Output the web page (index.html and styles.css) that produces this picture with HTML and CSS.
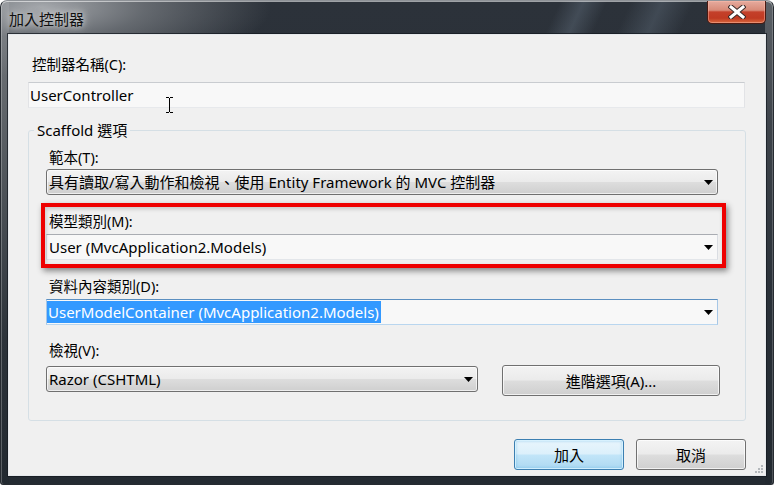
FILE: index.html
```html
<!DOCTYPE html>
<html lang="zh-Hant">
<head>
<meta charset="utf-8">
<title>加入控制器</title>
<link rel="stylesheet" href="styles.css">
</head>
<body>
<div class="window">
  <div class="titlebar">
    <span class="title">加入控制器</span>
    <div class="close">
      <svg width="18" height="14" viewBox="0 0 18 14" aria-hidden="true">
        <path d="M3 2 L15 12 M15 2 L3 12" stroke="#3a2a28" stroke-width="5" stroke-linecap="square" fill="none"/>
        <path d="M3 2 L15 12 M15 2 L3 12" stroke="#ffffff" stroke-width="3" stroke-linecap="square" fill="none"/>
      </svg>
    </div>
  </div>
  <div class="client">
    <div class="label">控制器名稱(C):</div>
    <div class="textbox">
      <span class="value">UserController</span>
      <svg class="ibeam" width="7" height="16" viewBox="0 0 7 16" aria-hidden="true">
        <path d="M0 0.5H3M4 0.5H7M3.5 1V15M0 15.5H3M4 15.5H7" stroke="#000" stroke-width="1" fill="none"/>
      </svg>
    </div>
    <fieldset class="group">
      <legend>Scaffold 選項</legend>
      <div class="label first">範本(T):</div>
      <div class="combo combo-btn gap-s">
        <span class="value">具有讀取/寫入動作和檢視、使用 Entity Framework 的 MVC 控制器</span>
        <svg class="arrow" width="9" height="5" viewBox="0 0 9 5" aria-hidden="true"><path d="M0 0H9L4.5 5Z" fill="#000"/></svg>
      </div>
      <div class="mark-wrap">
        <div class="label">模型類別(M):</div>
        <div class="combo combo-edit gap-s">
          <span class="value">User (MvcApplication2.Models)</span>
          <svg class="arrow" width="9" height="5" viewBox="0 0 9 5" aria-hidden="true"><path d="M0 0H9L4.5 5Z" fill="#000"/></svg>
        </div>
        <div class="mark"></div>
      </div>
      <div class="label next">資料內容類別(D):</div>
      <div class="combo combo-edit combo-focus gap-s">
        <span class="value sel">UserModelContainer (MvcApplication2.Models)</span>
        <svg class="arrow" width="9" height="5" viewBox="0 0 9 5" aria-hidden="true"><path d="M0 0H9L4.5 5Z" fill="#000"/></svg>
      </div>
      <div class="row">
        <div class="col">
          <div class="label view">檢視(V):</div>
          <div class="combo combo-btn gap-v">
            <span class="value">Razor (CSHTML)</span>
            <svg class="arrow" width="9" height="5" viewBox="0 0 9 5" aria-hidden="true"><path d="M0 0H9L4.5 5Z" fill="#000"/></svg>
          </div>
        </div>
        <div class="btn btn-adv">進階選項(A)...</div>
      </div>
    </fieldset>
    <div class="buttons">
      <div class="btn btn-default">加入</div>
      <div class="btn">取消</div>
    </div>
    <svg class="grip" width="10" height="10" viewBox="0 0 10 10" aria-hidden="true">
      <g fill="#b4b8bc">
        <rect x="7" y="1" width="2" height="2"/>
        <rect x="4" y="4" width="2" height="2"/><rect x="7" y="4" width="2" height="2"/>
        <rect x="1" y="7" width="2" height="2"/><rect x="4" y="7" width="2" height="2"/><rect x="7" y="7" width="2" height="2"/>
      </g>
    </svg>
  </div>
</div>
</body>
</html>
```
FILE: styles.css
```css
html, body {
  margin: 0;
  padding: 0;
  background: #ffffff;
}

body {
  font-family: "Noto Sans", "Noto Sans CJK TC", sans-serif;
  color: #000;
}

.window {
  width: 774px;
  height: 485px;
  box-sizing: border-box;
  display: flex;
  flex-direction: column;
  border: 1px solid #262b31;
  border-top-color: #8e9297;
  border-radius: 7px 7px 3px 3px;
  overflow: hidden;
  box-shadow: inset 0 1px 0 rgba(255, 255, 255, 0.55), inset 1px 0 0 rgba(255, 255, 255, 0.25), inset -1px 0 0 rgba(255, 255, 255, 0.2);
  background:
    radial-gradient(ellipse 230px 70px at 40px 6px, rgba(170, 173, 177, 0.95) 0%, rgba(125, 129, 134, 0.7) 45%, rgba(125, 129, 134, 0) 100%) no-repeat,
    linear-gradient(115deg, rgba(0, 0, 0, 0) 71%, rgba(85, 97, 110, 0.55) 74%, rgba(0, 0, 0, 0) 77%, rgba(0, 0, 0, 0) 80%, rgba(85, 97, 110, 0.5) 84%, rgba(0, 0, 0, 0) 88%) 0 0 / 100% 34px no-repeat,
    linear-gradient(to bottom, #767a7f 0, #62676c 20%, #2c333a 70%, #222930 100%) 0 0 / 8px 100% no-repeat,
    linear-gradient(to bottom, #5d6268 0, #3e444b 25%, #2a3139 60%, #222930 100%) right 0 top 0 / 8px 100% no-repeat,
    linear-gradient(to bottom, #2c323a 0, #293038 40%, #242b32 100%);
}

.titlebar {
  height: 33px;
  flex: none;
  display: flex;
  justify-content: space-between;
  align-items: flex-start;
}

.title {
  margin-left: 8px;
  padding-top: 8px;
  font-size: 15px;
  line-height: 20px;
  color: #101010;
  text-shadow: 0 0 6px rgba(255, 255, 255, 0.8), 0 0 12px rgba(255, 255, 255, 0.55);
}

.close {
  width: 59px;
  height: 23px;
  margin-right: 7px;
  box-sizing: border-box;
  border: 1px solid #4a1a12;
  border-top: none;
  border-radius: 0 0 5px 5px;
  background: linear-gradient(to bottom, #e6ab9e 0%, #d88a78 42%, #c4402a 50%, #c03a22 78%, #d8683e 100%);
  box-shadow: inset 0 0 0 1px rgba(255, 190, 175, 0.45);
  display: flex;
  align-items: center;
  justify-content: center;
}

.client {
  flex: 1;
  margin: 0 7px 8px 7px;
  border: 1px solid #e6e9ec;
  box-shadow: 0 0 0 1px rgba(22, 27, 33, 0.75);
  background: #f0f0f0;
  padding: 20px 19px 0 19px;
  display: flex;
  flex-direction: column;
  position: relative;
}

.label {
  font-size: 14.5px;
  line-height: 18px;
  height: 18px;
  padding-left: 4px;
  white-space: nowrap;
}

.value {
  font-size: 15px;
  line-height: 20px;
  white-space: nowrap;
  overflow: hidden;
  flex: 1;
}

.textbox {
  margin-top: 9px;
  margin-right: 1px;
  height: 26px;
  box-sizing: border-box;
  border: 1px solid;
  border-color: #c9ccd0 #e2e3e6 #e7e9ec #e2e3e6;
  background: #f8f8f8;
  padding-left: 1px;
  display: flex;
  align-items: center;
  position: relative;
}

.ibeam {
  position: absolute;
  left: 137px;
  top: 14px;
}

.group {
  margin: 12px 0 0 0;
  border: 1px solid #d5dfe5;
  border-radius: 3px;
  padding: 8px 27px 24px 17px;
  min-width: 0;
}

.group legend {
  margin-left: -12px;
  padding: 0 3px;
  font-size: 15px;
  line-height: 20px;
  height: 20px;
}

.group .label {
  padding-left: 3px;
}

.combo {
  height: 26px;
  box-sizing: border-box;
  display: flex;
  align-items: center;
  padding-left: 2px;
}

.gap-s { margin-top: 4px; }
.label.first + .combo { margin-top: 3px; }
.gap-v { margin-top: 7px; }

.arrow {
  flex: none;
  margin: 0 4px 0 6px;
}

.combo-btn {
  border: 1px solid #707070;
  border-radius: 3px;
  background: linear-gradient(to bottom, #f3f3f3 0%, #ebebeb 48%, #dddddd 52%, #cfcfcf 100%);
  box-shadow: inset 0 0 0 1px rgba(255, 255, 255, 0.65);
}

.combo-edit {
  border: 1px solid;
  border-color: #a9acb2 #dadde2 #e3e6ea #dadde2;
  background: #f8f8f8;
}

.combo-focus {
  border-color: #5b8fc0 #a7c7e6 #b9d6ef #a7c7e6;
  padding-left: 0;
}

.sel {
  flex: none;
  background: #3399ff;
  color: #ffffff;
  line-height: 22px;
  padding: 0 2px 0 1px;
}

.combo-focus .arrow {
  margin-left: auto;
}

.mark-wrap {
  position: relative;
  margin-top: 17px;
}

.mark {
  position: absolute;
  left: -5px;
  top: -9px;
  right: -8px;
  bottom: -8px;
  border: 4px solid #ee0000;
  box-shadow: 2px 3px 6px rgba(0, 0, 0, 0.45), inset 1px 2px 4px rgba(0, 0, 0, 0.18);
  pointer-events: none;
}

.label.next {
  margin-top: 17px;
}

.row {
  display: flex;
  align-items: flex-end;
  margin-right: -2px;
}

.col {
  width: 432px;
  margin-bottom: 4px;
  flex: none;
}

.label.view {
  margin-top: 16px;
}

.btn {
  width: 110px;
  height: 31px;
  box-sizing: border-box;
  border: 1px solid #707070;
  border-radius: 3px;
  background: linear-gradient(to bottom, #f3f3f3 0%, #ebebeb 48%, #dddddd 52%, #cfcfcf 100%);
  box-shadow: inset 0 0 0 1px rgba(255, 255, 255, 0.7);
  display: flex;
  align-items: center;
  justify-content: center;
  font-size: 15px;
  line-height: 20px;
  white-space: nowrap;
}

.btn-adv {
  width: 218px;
  margin-left: 24px;
}

.btn-default {
  border-color: #3c7fb1;
  background: linear-gradient(to bottom, #e9f5fc 0%, #dcf0fb 48%, #c2e5f8 52%, #acd8f1 100%);
  box-shadow: inset 0 0 0 1px rgba(220, 245, 255, 0.85), inset 0 0 3px 1px rgba(70, 170, 230, 0.45);
}

.buttons {
  margin-top: 18px;
  display: flex;
  justify-content: flex-end;
  gap: 12px;
}

.grip {
  position: absolute;
  right: 1px;
  bottom: 1px;
}
```
